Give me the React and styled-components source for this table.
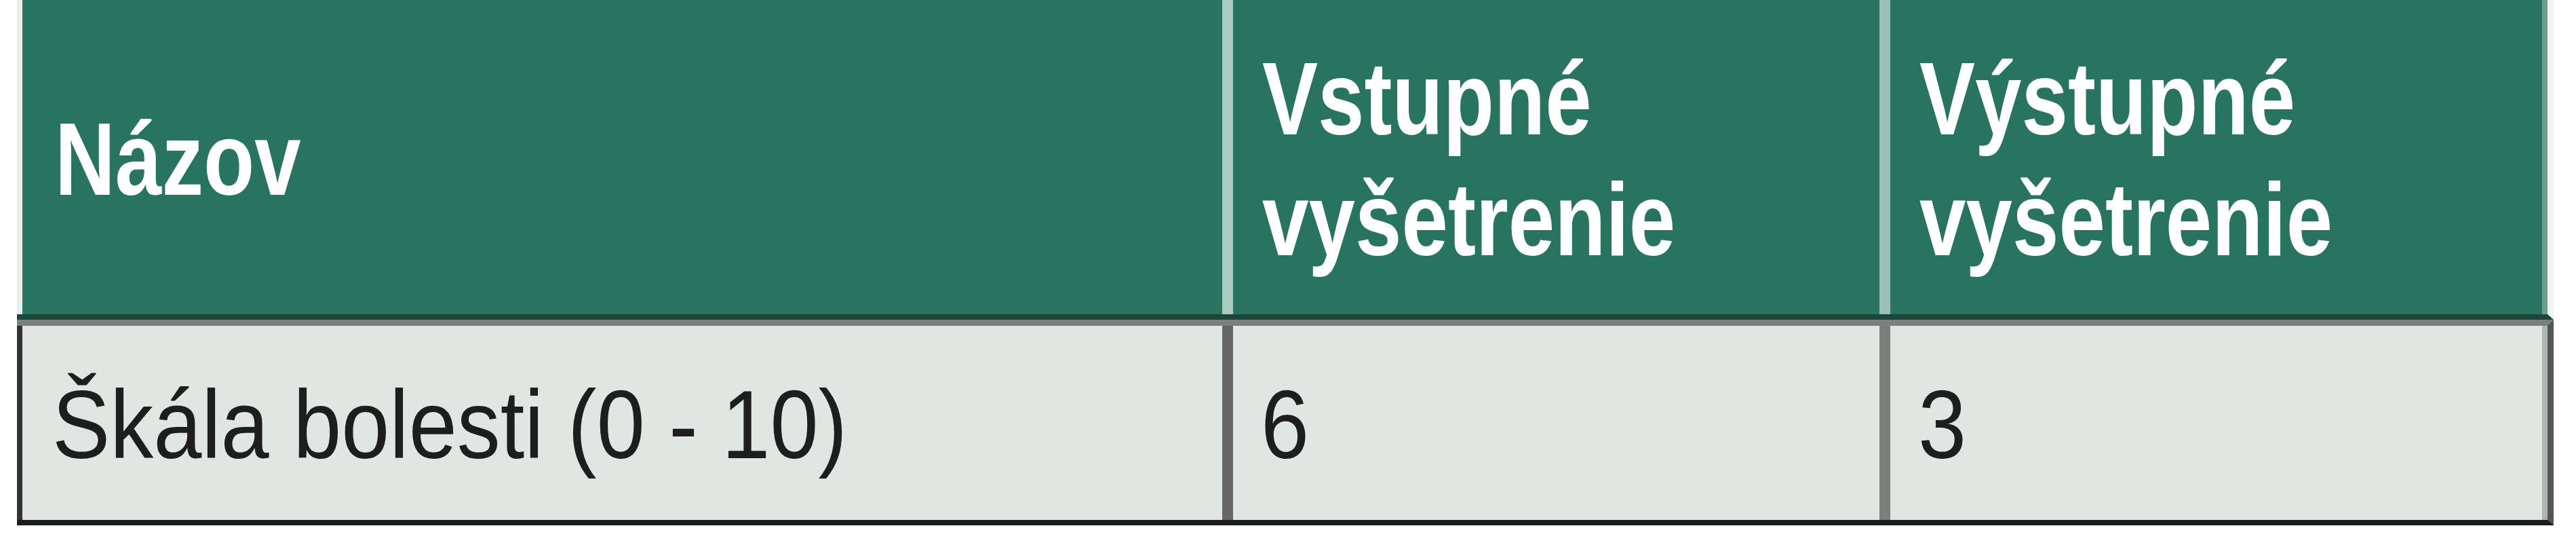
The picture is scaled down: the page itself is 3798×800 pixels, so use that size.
import styled, { createGlobalStyle } from 'styled-components';

const GlobalStyle = createGlobalStyle`
   html, body {
      margin: 0;
      padding: 0;
      background: #ffffff;
   }
`;

const columns = [
   { head: ['Názov'], value: 'Škála bolesti (0 - 10)' },
   { head: ['Vstupné', 'vyšetrenie'], value: '6' },
   { head: ['Výstupné', 'vyšetrenie'], value: '3' },
];

const App = () => {
   return (
      <>
         <GlobalStyle />
         <Page>
            <Table>
               <HeadRow>
                  {columns.map((col, i) => (
                     <HeadCell key={i} $index={i}>
                        <HeadText>
                           {col.head.map((line) => (
                              <span key={line}>{line}</span>
                           ))}
                        </HeadText>
                     </HeadCell>
                  ))}
               </HeadRow>
               <BodyRow>
                  {columns.map((col, i) => (
                     <BodyCell key={i} $index={i}>
                        <BodyText>{col.value}</BodyText>
                     </BodyCell>
                  ))}
               </BodyRow>
            </Table>
         </Page>
      </>
   );
};
export default App;

const Page = styled.div`
   padding-left: 25px;
   width: 3740px;
`;

const Table = styled.div`
   display: flex;
   flex-flow: column nowrap;
   width: 3740px;
`;

const HeadRow = styled.div`
   display: grid;
   grid-template-columns: 1777px 969px 985px;
   border-bottom: 8px solid #1f4539;
   border-right: 9px solid #f1f4f3;
   height: 463px;
`;

const headBorders = [
   'border-left: 8px solid #e6eeeb; padding-left: 48px;',
   'border-left: 16px solid #93bbad; border-image: linear-gradient(to right, #aacbc0 50%, #7ea99a 50%) 1;',
   'border-left: 16px solid #9bbfb4; border-right: 8px solid #6b9e8c;',
];

const HeadCell = styled.div`
   background: #287460;
   display: flex;
   align-items: center;
   padding-left: 43px;
   ${(props) => headBorders[props.$index]}
`;

const HeadText = styled.div`
   display: flex;
   flex-flow: column nowrap;
   font-family: "Liberation Sans", Arial, sans-serif;
   font-weight: 700;
   font-size: 152px;
   line-height: 178px;
   color: #ffffff;
   white-space: nowrap;
   transform: scaleX(0.81);
   transform-origin: left center;
   margin-top: 4px;
`;

const BodyRow = styled.div`
   display: grid;
   grid-template-columns: 1777px 969px 985px;
   border-top: 9px solid #7b807c;
   border-bottom: 8px solid #1c1c1a;
   border-right: 9px solid #545454;
   height: 286px;
`;

const bodyBorders = [
   'border-left: 8px solid #333333; padding-left: 44px;',
   'border-left: 16px solid #7f7f7f; border-image: linear-gradient(to right, #666666 50%, #999c9a 50%) 1;',
   'border-left: 16px solid #7a7f7c; border-right: 8px solid #adb5b0;',
];

const BodyCell = styled.div`
   background: #e0e6e1;
   display: flex;
   align-items: center;
   padding-left: 41px;
   ${(props) => bodyBorders[props.$index]}
`;

const BodyText = styled.span`
   display: inline-block;
   font-family: "Liberation Sans", Arial, sans-serif;
   font-weight: 400;
   font-size: 142px;
   line-height: 1;
   color: #1e1e1e;
   white-space: nowrap;
   transform: scaleX(0.9);
   transform-origin: left center;
   margin-top: 6px;
`;
